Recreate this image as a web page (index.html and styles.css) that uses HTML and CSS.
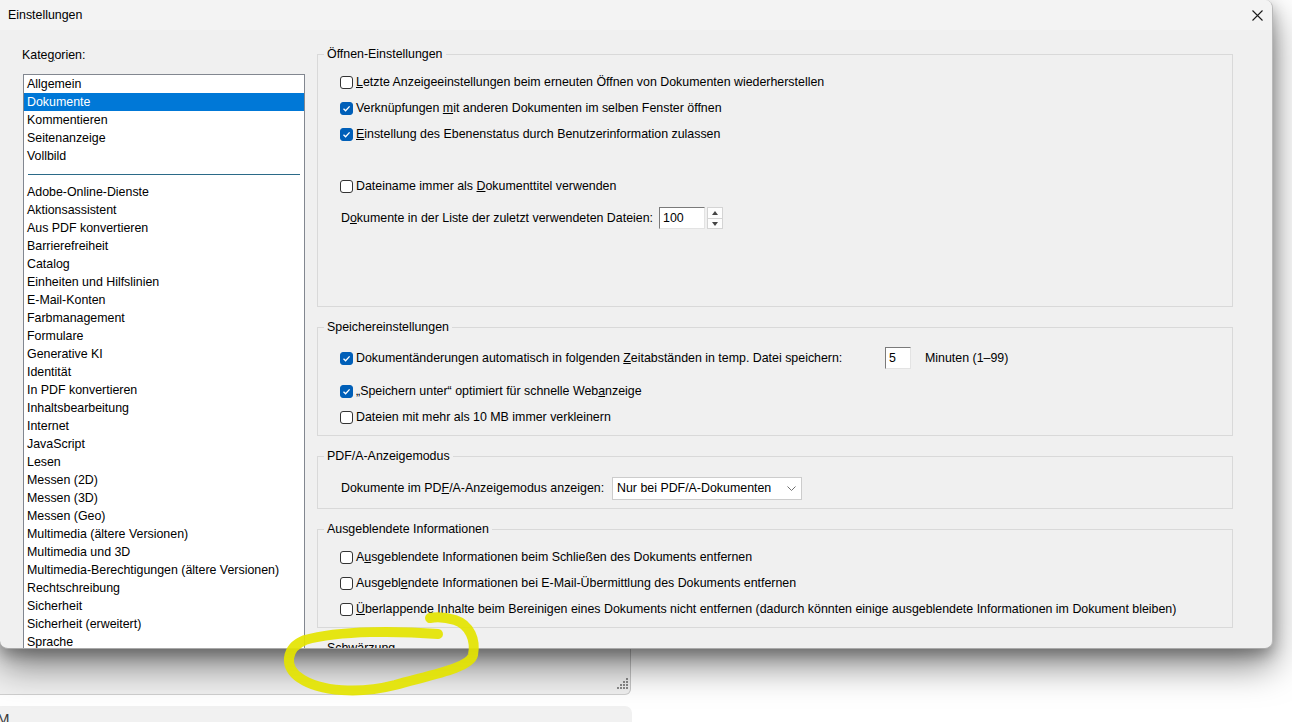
FILE: index.html
```html
<!DOCTYPE html>
<html lang="de">
<head>
    <meta charset="UTF-8">
    <title>Einstellungen</title>
    <link rel="stylesheet" href="styles.css">
</head>
<body>
    <div class="desk">
        <div class="backwin">
            <svg class="grip" width="14" height="14" viewBox="0 0 14 14">
                <g fill="#8a8a8a">
                    <rect x="11" y="2" width="2" height="2"/>
                    <rect x="8" y="5" width="2" height="2"/><rect x="11" y="5" width="2" height="2"/>
                    <rect x="5" y="8" width="2" height="2"/><rect x="8" y="8" width="2" height="2"/><rect x="11" y="8" width="2" height="2"/>
                    <rect x="2" y="11" width="2" height="2"/><rect x="5" y="11" width="2" height="2"/><rect x="8" y="11" width="2" height="2"/><rect x="11" y="11" width="2" height="2"/>
                </g>
            </svg>
        </div>
        <div class="backbar"><span>M</span></div>

        <div class="dialog">
            <div class="titlebar">
                <span class="title">Einstellungen</span>
                <svg class="close" width="11" height="11" viewBox="0 0 11 11">
                    <path d="M0.5 0.5 L10.5 10.5 M10.5 0.5 L0.5 10.5" stroke="#1a1a1a" stroke-width="1.1" fill="none"/>
                </svg>
            </div>
            <div class="content">
                <div class="cats">
                    <div class="cats-label">Kate<u>g</u>orien:</div>
                    <ul class="catlist">
                        <li>Allgemein</li>
                        <li class="sel">Dokumente</li>
                        <li>Kommentieren</li>
                        <li>Seitenanzeige</li>
                        <li>Vollbild</li>
                        <li class="sep"></li>
                        <li>Adobe-Online-Dienste</li>
                        <li>Aktionsassistent</li>
                        <li>Aus PDF konvertieren</li>
                        <li>Barrierefreiheit</li>
                        <li>Catalog</li>
                        <li>Einheiten und Hilfslinien</li>
                        <li>E-Mail-Konten</li>
                        <li>Farbmanagement</li>
                        <li>Formulare</li>
                        <li>Generative KI</li>
                        <li>Identität</li>
                        <li>In PDF konvertieren</li>
                        <li>Inhaltsbearbeitung</li>
                        <li>Internet</li>
                        <li>JavaScript</li>
                        <li>Lesen</li>
                        <li>Messen (2D)</li>
                        <li>Messen (3D)</li>
                        <li>Messen (Geo)</li>
                        <li>Multimedia (ältere Versionen)</li>
                        <li>Multimedia und 3D</li>
                        <li>Multimedia-Berechtigungen (ältere Versionen)</li>
                        <li>Rechtschreibung</li>
                        <li>Sicherheit</li>
                        <li>Sicherheit (erweitert)</li>
                        <li>Sprache</li>
                        <li>Unterschriften</li>
                    </ul>
                </div>

                <div class="panel">
                    <fieldset class="group g-open">
                        <legend>Öffnen-Einstellungen</legend>
                        <div class="row"><span class="cb"></span><span><u>L</u>etzte Anzeigeeinstellungen beim erneuten Öffnen von Dokumenten wiederherstellen</span></div>
                        <div class="row"><span class="cb on"></span><span>Verknüpfungen <u>m</u>it anderen Dokumenten im selben Fenster öffnen</span></div>
                        <div class="row"><span class="cb on"></span><span><u>E</u>instellung des Ebenenstatus durch Benutzerinformation zulassen</span></div>
                        <div class="row gap-before"><span class="cb"></span><span>Dateiname immer als <u>D</u>okumenttitel verwenden</span></div>
                        <div class="row spin-row">
                            <span class="lbl lbl-recent">D<u>o</u>kumente in der Liste der zuletzt verwendeten Dateien:</span>
                            <span class="field f-recent">100</span>
                            <span class="spin"><span class="up"></span><span class="down"></span></span>
                        </div>
                    </fieldset>

                    <fieldset class="group g-save">
                        <legend>Speichereinstellungen</legend>
                        <div class="row r-auto"><span class="cb on"></span><span class="lbl lbl-auto">Dokumentänderungen automatisch in folgenden <u>Z</u>eitabständen in temp. Datei speichern:</span><span class="field f-min">5</span><span class="unit">Minuten (1–99)</span></div>
                        <div class="row r-web"><span class="cb on"></span><span>„Speichern unter“ optimiert für schnelle Web<u>a</u>nzeige</span></div>
                        <div class="row"><span class="cb"></span><span>Dateien mit mehr als 10 MB immer verkleinern</span></div>
                    </fieldset>

                    <fieldset class="group g-pdfa">
                        <legend>PDF/A-Anzeigemodus</legend>
                        <div class="row">
                            <span class="lbl lbl-pdfa">Dokumente im PD<u>F</u>/A-Anzeigemodus anzeigen:</span>
                            <span class="select">Nur bei PDF/A-Dokumenten
                                <svg width="9" height="5" viewBox="0 0 9 5"><path d="M0.5 0.5 L4.5 4.5 L8.5 0.5" stroke="#707070" fill="none"/></svg>
                            </span>
                        </div>
                    </fieldset>

                    <fieldset class="group g-hidden">
                        <legend>Ausgeblendete Informationen</legend>
                        <div class="row"><span class="cb"></span><span>A<u>u</u>sgeblendete Informationen beim Schließen des Dokuments entfernen</span></div>
                        <div class="row"><span class="cb"></span><span>Ausgebl<u>e</u>ndete Informationen bei E-Mail-Übermittlung des Dokuments entfernen</span></div>
                        <div class="row"><span class="cb"></span><span><u>Ü</u>berlappende Inhalte beim Bereinigen eines Dokuments nicht entfernen (dadurch könnten einige ausgeblendete Informationen im Dokument bleiben)</span></div>
                    </fieldset>

                    <fieldset class="group">
                        <legend>Schwärzung</legend>
                        <div class="row"><span class="cb"></span><span>Schwärzung</span></div>
                    </fieldset>
                </div>
            </div>
        </div>

        <svg class="scribble" width="1292" height="722" viewBox="0 0 1292 722">
            <path d="M438 634 C400 631 340 630 305 640 C285 648 284 668 300 678 C320 692 360 694 395 685 C430 675 470 668 473 655 C476 640 470 625 455 620 C445 617 435 617 430 618"
                  stroke="#e4e400" stroke-width="10" stroke-linecap="round" fill="none" opacity="0.92"/>
        </svg>
    </div>
</body>
</html>
```

FILE: styles.css
```css
* {
    box-sizing: border-box;
}

body {
    margin: 0;
    background: #ffffff;
    font-family: "Liberation Sans", Arial, sans-serif;
    font-size: 12.4px;
    color: #000;
    overflow: hidden;
}

.desk {
    position: relative;
    width: 1292px;
    height: 722px;
    overflow: hidden;
}

/* windows lying behind the dialog */
.backwin {
    position: absolute;
    top: 0;
    left: 0;
    width: 631px;
    height: 695px;
    background: #f0f0f0;
    border-right: 1px solid #c6c6c6;
    border-bottom: 1px solid #cfcfcf;
    border-radius: 0 0 6px 0;
}

.grip {
    position: absolute;
    right: 1px;
    bottom: 4px;
}

.backbar {
    position: absolute;
    top: 706px;
    left: 0;
    width: 632px;
    height: 30px;
    background: #f1f1f1;
    border-radius: 0 7px 0 0;
    font-size: 15px;
    color: #3a3a3a;
}

.backbar span {
    display: block;
    margin: 4px 0 0 -3px;
}

/* dialog */
.dialog {
    position: absolute;
    top: 0;
    left: 0;
    width: 1273px;
    height: 649px;
    background: #f0f0f0;
    border-right: 1px solid #b9b9b9;
    border-bottom: 1px solid #a9a9a9;
    border-radius: 0 8px 8px 8px;
    box-shadow: 0 16px 36px rgba(0, 0, 0, 0.5), 0 6px 14px rgba(0, 0, 0, 0.25);
    overflow: hidden;
}

.titlebar {
    height: 30px;
    background: #f3f3f3;
    display: flex;
    align-items: center;
    justify-content: space-between;
    padding: 0 9px 0 8px;
}

.title {
    line-height: 16px;
}

.content {
    display: flex;
    gap: 12px;
    padding: 17px 0 0 22px;
    height: 618px;
    overflow: hidden;
}

.cats {
    width: 283px;
    flex: none;
}

.cats-label {
    line-height: 16px;
    margin-bottom: 11px;
}

.catlist {
    list-style: none;
    margin: 0 0 0 1px;
    padding: 0;
    background: #fff;
    border: 1px solid #828790;
    height: 700px;
}

.catlist li {
    height: 18px;
    line-height: 19px;
    padding-left: 3px;
    white-space: nowrap;
}

.catlist li.sel {
    background: #0078d7;
    color: #fff;
}

.catlist li.sep {
    position: relative;
}

.catlist li.sep::after {
    content: "";
    position: absolute;
    left: 4px;
    right: 4px;
    top: 9px;
    border-top: 1px solid #2b6a88;
}

.panel {
    width: 916px;
    flex: none;
    display: flex;
    flex-direction: column;
    gap: 12px;
    margin-top: -1px;
}

.group {
    margin: 0;
    padding: 7px 0 5px 6px;
    border: 1px solid #d9d9d9;
    min-width: 0;
}

.group legend {
    padding: 0 3px;
    line-height: 16px;
}

.row {
    display: flex;
    align-items: center;
    height: 26px;
    padding-left: 17px;
    white-space: nowrap;
}

.gap-before {
    margin-top: 26px;
}

.spin-row {
    margin-top: 6px;
}

.g-open {
    padding-bottom: 75px;
}

.g-save {
    padding-top: 10px;
}

.r-web {
    margin-top: 7px;
}

.g-pdfa {
    padding-top: 11px;
    padding-bottom: 7px;
}

/* checkbox */
.cb {
    width: 13px;
    height: 13px;
    border: 1px solid #333;
    border-radius: 3px;
    background: #fff;
    margin: 0 3px 0 -1px;
    flex: none;
}

.cb.on {
    background: #005fb8 url("data:image/svg+xml;utf8,<svg xmlns='http://www.w3.org/2000/svg' width='11' height='11' viewBox='0 0 11 11'><path d='M2.5 5.8 L4.6 7.8 L8.6 3.4' stroke='white' stroke-width='1.3' fill='none'/></svg>") center no-repeat;
    border-color: #005fb8;
}

.lbl-recent {
    width: 318px;
}

.lbl-auto {
    width: 529px;
}

.lbl-pdfa {
    width: 271px;
}

.field {
    height: 22px;
    background: #fff;
    border: 1px solid #e3e3e3;
    border-top-color: #7a7a7a;
    border-left-color: #7a7a7a;
    padding: 2px 3px;
    line-height: 16px;
}

.f-recent {
    width: 46px;
}

.f-min {
    width: 26px;
}

.unit {
    margin-left: 14px;
}

.spin {
    display: flex;
    flex-direction: column;
    width: 16px;
    height: 22px;
    margin-left: 2px;
    border: 1px solid #d4d4d4;
    background: #fdfdfd;
}

.spin span {
    flex: 1;
    position: relative;
}

.spin .up {
    border-bottom: 1px solid #d4d4d4;
}

.spin span::after {
    content: "";
    position: absolute;
    left: 4px;
    top: 3px;
    border-left: 3px solid transparent;
    border-right: 3px solid transparent;
}

.spin .up::after {
    border-bottom: 4px solid #444;
}

.spin .down::after {
    border-top: 4px solid #444;
}

.select {
    width: 190px;
    height: 23px;
    background: #fff;
    border: 1px solid #cccccc;
    display: flex;
    align-items: center;
    justify-content: space-between;
    padding: 0 5px 0 4px;
}

.scribble {
    position: absolute;
    top: 0;
    left: 0;
    pointer-events: none;
}
```
